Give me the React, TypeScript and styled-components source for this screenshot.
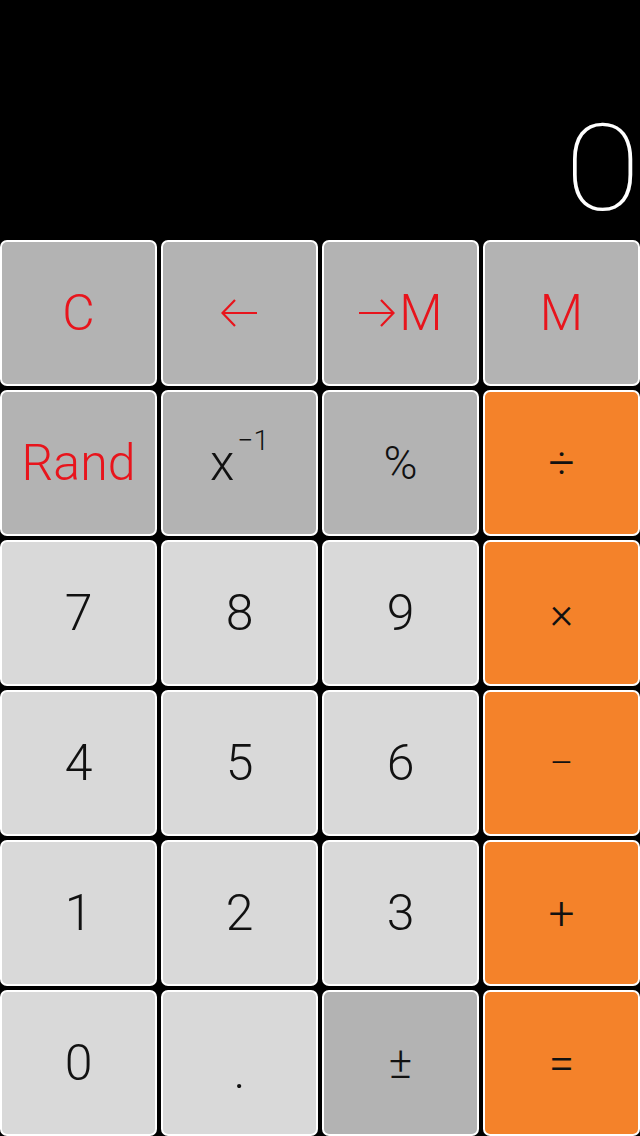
import styled, { createGlobalStyle } from "styled-components";

type Kind = "fn" | "num" | "op";

const RED = "#e8141c";

const GlobalStyle = createGlobalStyle`
  html, body {
    margin: 0;
    padding: 0;
    background: #000;
  }
  body {
    font-family: Roboto, "Open Sans", "Liberation Sans", sans-serif;
  }
`;

const Screen = styled.div`
  width: 640px;
  height: 1136px;
  background: #000;
  display: flex;
  flex-direction: column;
`;

const Display = styled.div`
  height: 240px;
  display: flex;
  align-items: flex-end;
  justify-content: flex-end;
  padding: 0 0 11px 0;
  box-sizing: border-box;
  color: #fff;
  font-size: 120px;
  font-weight: 100;
  line-height: 1;
  span {
    display: inline-block;
    margin-right: -1px;
    transform: scaleX(1.16);
    transform-origin: right bottom;
  }
`;

const Keypad = styled.div`
  flex: 1;
  display: grid;
  grid-template-columns: repeat(4, 1fr);
  grid-template-rows: repeat(6, 1fr);
  gap: 4px;
`;

const bg: Record<Kind, string> = {
  fn: "#b3b3b3",
  num: "#d9d9d9",
  op: "#f4822a",
};

const Key = styled.button<{ $kind: Kind; $red?: boolean; $size?: number }>`
  appearance: none;
  margin: 0;
  padding: 0;
  border: 2px solid #fff;
  border-radius: 7px;
  background: ${(p) => bg[p.$kind]};
  color: ${(p) => (p.$red ? RED : "#111")};
  font-family: Roboto, "Open Sans", "Liberation Sans", sans-serif;
  font-weight: 300;
  font-size: ${(p) => p.$size ?? 50}px;
  display: flex;
  align-items: center;
  justify-content: center;
  gap: 4px;
  line-height: 1;
`;

const Sup = styled.sup`
  font-size: 28px;
  vertical-align: 0;
  position: relative;
  top: -22px;
  margin-left: -1px;
`;

const Dot = styled.span`
  position: relative;
  top: 8px;
`;

const Arrow = ({ dir }: { dir: "left" | "right" }) => (
  <svg width="37" height="30" viewBox="0 0 37 30" fill="none" stroke={RED} strokeWidth="2.2">
    {dir === "left" ? (
      <path d="M36 15H1.5M14 2L1.5 15L14 28" />
    ) : (
      <path d="M1 15H35.5M23 2L35.5 15L23 28" />
    )}
  </svg>
);

const keys: { label: React.ReactNode; kind: Kind; red?: boolean; size?: number }[] = [
  { label: "C", kind: "fn", red: true },
  { label: <Arrow dir="left" />, kind: "fn", red: true },
  { label: <><Arrow dir="right" />M</>, kind: "fn", red: true },
  { label: "M", kind: "fn", red: true },
  { label: "Rand", kind: "fn", red: true },
  { label: <>x<Sup>−1</Sup></>, kind: "fn" },
  { label: "%", kind: "fn", size: 46 },
  { label: "÷", kind: "op", size: 46 },
  { label: "7", kind: "num" },
  { label: "8", kind: "num" },
  { label: "9", kind: "num" },
  { label: "×", kind: "op", size: 44 },
  { label: "4", kind: "num" },
  { label: "5", kind: "num" },
  { label: "6", kind: "num" },
  { label: "–", kind: "op", size: 36 },
  { label: "1", kind: "num" },
  { label: "2", kind: "num" },
  { label: "3", kind: "num" },
  { label: "+", kind: "op", size: 46 },
  { label: "0", kind: "num" },
  { label: <Dot>.</Dot>, kind: "num", size: 50 },
  { label: "±", kind: "fn", size: 44 },
  { label: "=", kind: "op", size: 46 },
];

export default function App() {
  return (
    <>
      <GlobalStyle />
      <Screen>
        <Display>
          <span>0</span>
        </Display>
        <Keypad>
          {keys.map((k, i) => (
            <Key key={i} $kind={k.kind} $red={k.red} $size={k.size}>
              {k.label}
            </Key>
          ))}
        </Keypad>
      </Screen>
    </>
  );
}
